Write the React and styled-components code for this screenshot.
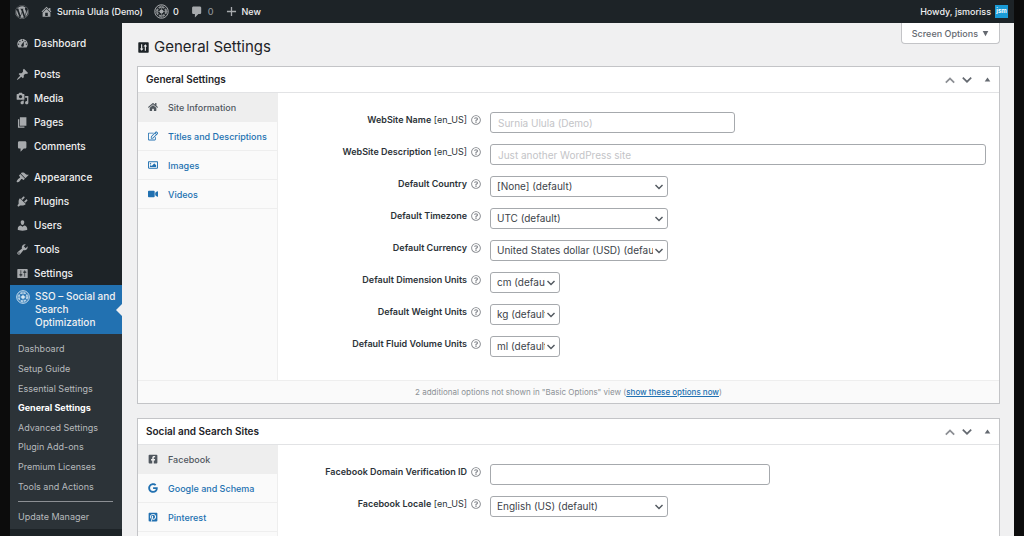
import React from 'react';
import styled, { createGlobalStyle } from 'styled-components';
import {
  FaWordpress,
  FaHome,
  FaRegEdit,
  FaRegImage,
  FaVideo,
  FaFacebookSquare,
  FaGoogle,
  FaPinterestSquare,
  FaRegQuestionCircle,
} from 'react-icons/fa';

const GlobalStyle = createGlobalStyle`
  * {
    box-sizing: border-box;
  }

  body {
    margin: 0;
    background: #0c0c0c;
    color: #3c434a;
    font-family: Inter, 'Liberation Sans', sans-serif;
    font-size: 10px;
    line-height: 13px;
  }

  button, input, select {
    font: inherit;
    color: inherit;
  }

  ul {
    margin: 0;
    padding: 0;
    list-style: none;
  }

  a {
    text-decoration: none;
  }
`;

const Frame = styled.div`
  display: flex;
  flex-direction: column;
  height: 100vh;
  margin: 0 10px;
  overflow: hidden;
  background: #f0f0f1;
`;

const AdminBar = styled.header`
  display: flex;
  flex: none;
  align-items: center;
  gap: 11px;
  height: 23px;
  padding: 0 6px 0 5px;
  background: #1d2327;
`;

const BarLink = styled.a`
  display: flex;
  align-items: center;
  gap: 4px;
  color: ${({ $dim }) => ($dim ? '#8c9196' : '#f0f0f1')};
  font-size: 9px;
  font-weight: 500;

  svg {
    color: #a7aaad;
  }
`;

const Account = styled(BarLink)`
  margin-left: auto;
`;

const Avatar = styled.span`
  width: 13px;
  height: 13px;
  background: #1a9ad6;
  color: #fff;
  font-size: 6px;
  font-weight: 700;
  line-height: 12px;
  text-align: center;
`;

const Columns = styled.div`
  display: flex;
  flex: 1;
  min-height: 0;
`;

const Sidebar = styled.nav`
  flex: none;
  width: 112px;
  padding-top: 8px;
  background: #1d2327;
`;

const MenuGroup = styled.ul`
  margin-bottom: ${({ $last }) => ($last ? '0' : '7px')};
`;

const MenuLink = styled.a`
  position: relative;
  display: flex;
  align-items: flex-start;
  gap: 5px;
  padding: ${({ $current }) => ($current ? '5px 6px' : '6px 6px 5px')};
  background: ${({ $current }) => ($current ? '#2271b1' : 'transparent')};
  color: #f0f0f1;
  font-weight: 500;

  svg {
    flex: none;
    color: ${({ $current }) => ($current ? '#dbe9f4' : '#a7aaad')};
  }

  &::after {
    content: '';
    display: ${({ $current }) => ($current ? 'block' : 'none')};
    position: absolute;
    top: 50%;
    right: 0;
    margin-top: -6px;
    border: 6px solid transparent;
    border-left-width: 0;
    border-right-color: #f0f0f1;
  }
`;

const Submenu = styled.div`
  padding: 5px 0 4px;
  background: #2c3338;
`;

const SubmenuList = styled.ul`
  display: grid;
  grid-auto-rows: 1fr;
  min-height: ${({ $tall }) => ($tall ? '157px' : '18px')};
  align-items: center;
  padding: 0 8px;
`;

const SubmenuLink = styled.a`
  color: ${({ $current }) => ($current ? '#fff' : '#b7babd')};
  font-size: 9px;
  font-weight: ${({ $current }) => ($current ? 700 : 400)};
`;

const SubmenuRule = styled.hr`
  height: 1px;
  margin: 5px 9px 5px 8px;
  border: 0;
  background: #8c8f94;
`;

const Content = styled.main`
  flex: 1;
  min-width: 0;
  padding: 0 14px 0 15px;
`;

const TitleRow = styled.div`
  display: flex;
  justify-content: space-between;
  align-items: flex-start;
  height: 43px;
`;

const PageTitle = styled.h1`
  display: flex;
  align-items: center;
  gap: 4px;
  margin: 0;
  padding-top: 14px;
  color: #1d2327;
  font-size: 15px;
  font-weight: 400;
  line-height: 20px;
`;

const ScreenOptions = styled.button`
  display: flex;
  align-items: center;
  gap: 4px;
  height: 21px;
  padding: 0 10px;
  border: 1px solid #c3c4c7;
  border-top: 0;
  border-radius: 0 0 4px 4px;
  background: #fff;
  color: #646970;
  font-size: 9px;
  font-weight: 500;
`;

const Panel = styled.section`
  margin-bottom: 14px;
  border: 1px solid #c3c4c7;
  background: #fff;
`;

const PanelHeader = styled.div`
  display: flex;
  align-items: center;
  justify-content: space-between;
  height: 26px;
  padding: 0 8px;
  border-bottom: 1px solid #e2e3e5;
`;

const PanelTitle = styled.h2`
  margin: 0;
  color: #1d2327;
  font-size: 10px;
  font-weight: 600;
`;

const PanelActions = styled.div`
  display: flex;
  align-items: center;
  gap: 5px;
`;

const IconButton = styled.button`
  display: flex;
  padding: 0;
  border: 0;
  background: none;
  color: ${({ $faint }) => ($faint ? '#8c8f94' : '#646970')};
`;

const ToggleButton = styled(IconButton)`
  margin-left: 6px;
`;

const PanelBody = styled.div`
  display: flex;
`;

const Tabs = styled.ul`
  flex: none;
  width: 140px;
  border-right: 1px solid #eee;
  background: #fafafa;
`;

const TabLink = styled.a`
  display: flex;
  align-items: center;
  gap: 10px;
  height: 29px;
  padding-left: 10px;
  border-bottom: 1px solid #eee;
  background: ${({ $current }) => ($current ? '#eee' : 'transparent')};
  color: ${({ $current }) => ($current ? '#50575e' : '#2271b1')};
  font-size: 9px;
  font-weight: 500;
  white-space: nowrap;
`;

const Fields = styled.div`
  flex: 1;
  min-width: 0;
  padding: 19px 13px 12px 0;
`;

const FieldRow = styled.div`
  display: grid;
  grid-template-columns: 189px 23px 1fr;
  height: 32px;
`;

const FieldLabel = styled.label`
  padding-top: 1px;
  color: #2c3338;
  font-size: 9px;
  font-weight: 600;
  text-align: right;

  span {
    font-weight: 400;
  }
`;

const HelpButton = styled(IconButton)`
  align-self: start;
  padding: 3px 0 0 4px;
  color: #8c8f94;
`;

const TextInput = styled.input`
  width: ${({ $width }) => $width};
  height: 21px;
  padding: 0 7px;
  border: 1px solid #a6a9ad;
  border-radius: 3px;
  background: #fff;

  &::placeholder {
    color: #c3c4c7;
    opacity: 1;
  }
`;

const SelectWrap = styled.div`
  display: grid;
  align-items: center;
  width: ${({ $width }) => $width};
  height: 21px;

  select,
  svg {
    grid-area: 1 / 1;
  }

  svg {
    justify-self: end;
    margin-right: 4px;
    color: #50575e;
    pointer-events: none;
  }
`;

const SelectBox = styled.select`
  width: 100%;
  height: 21px;
  padding: 0 14px 0 6px;
  border: 1px solid #a6a9ad;
  border-radius: 3px;
  background: #fff;
  appearance: none;
`;

const PanelFooter = styled.p`
  margin: 0;
  padding: 5px 5px 4px;
  border-top: 1px solid #eee;
  background: #fafafa;
  color: #8c9196;
  font-size: 8px;
  text-align: center;

  a {
    color: #2271b1;
    font-weight: 500;
    text-decoration: underline;
  }
`;

const paths = {
  dashboard:
    'M3.76 16h12.48c1.1-1.37 1.76-3.11 1.76-5 0-4.42-3.58-8-8-8s-8 3.58-8 8c0 1.89.66 3.63 1.76 5zM10 4c.55 0 1 .45 1 1s-.45 1-1 1-1-.45-1-1 .45-1 1-1zM6 6c.55 0 1 .45 1 1s-.45 1-1 1-1-.45-1-1 .45-1 1-1zm8 0c.55 0 1 .45 1 1s-.45 1-1 1-1-.45-1-1 .45-1 1-1zm-5.37 5.55L12 7v6c0 1.1-.9 2-2 2s-2-.9-2-2c0-.57.24-1.08.63-1.45zM4 10c.55 0 1 .45 1 1s-.45 1-1 1-1-.45-1-1 .45-1 1-1zm12 0c.55 0 1 .45 1 1s-.45 1-1 1-1-.45-1-1 .45-1 1-1z',
  posts:
    'M10.44 3.02l1.82-1.82 6.36 6.35-1.83 1.82c-1.05-.68-2.48-.57-3.41.36l-.75.75c-.92.93-1.04 2.35-.35 3.41l-1.83 1.82-2.41-2.41-2.8 2.79c-.42.42-3.38 2.71-3.8 2.29s1.86-3.39 2.28-3.81l2.79-2.79L4.1 9.36l1.83-1.82c1.05.69 2.48.57 3.4-.36l.75-.75c.93-.92 1.05-2.35.36-3.41z',
  media:
    'M13 11V4c0-.55-.45-1-1-1h-1.67L9 1H5L3.67 3H2c-.55 0-1 .45-1 1v7c0 .55.45 1 1 1h10c.55 0 1-.45 1-1zM7 4.5c1.38 0 2.5 1.12 2.5 2.5S8.38 9.5 7 9.5 4.5 8.38 4.5 7 5.62 4.5 7 4.5zM14 6h5v10.5c0 1.38-1.12 2.5-2.5 2.5S14 17.88 14 16.5s1.12-2.5 2.5-2.5c.17 0 .34.02.5.05V9h-3V6zm-4 8.05V13h2v3.5c0 1.38-1.12 2.5-2.5 2.5S7 17.88 7 16.5 8.12 14 9.5 14c.17 0 .34.02.5.05z',
  pages: 'M6 15V2h10v13H6zm-1 1h8v2H3V5h2v11z',
  comments:
    'M5 2h9c1.1 0 2 .9 2 2v7c0 1.1-.9 2-2 2h-2l-5 5v-5H5c-1.1 0-2-.9-2-2V4c0-1.1.9-2 2-2z',
  appearance:
    'M14.48 11.06L7.41 3.99l1.5-1.5c.5-.56 2.3-.47 3.51.32 1.21.8 1.43 1.28 2.91 2.1 1.18.64 2.45 1.26 4.45.85zm-.71.71L6.7 4.7 4.93 6.47c-.39.39-.39 1.02 0 1.41l1.06 1.06c.39.39.39 1.03 0 1.42-.6.6-1.43 1.11-2.21 1.69-.35.26-.7.53-1.01.84C1.43 14.23.4 16.08 1.4 17.07c.99 1 2.84-.03 4.18-1.36.31-.31.58-.66.85-1.02.57-.78 1.08-1.61 1.69-2.21.39-.39 1.02-.39 1.41 0l1.06 1.06c.39.39 1.02.39 1.41 0z',
  plugins:
    'M13.11 4.36L9.87 7.6 8 5.73l3.24-3.24c.35-.34 1.05-.2 1.56.32.52.51.66 1.21.31 1.55zm-8 1.77l.91-1.12 9.01 9.01-1.19.84c-.71.71-2.63 1.16-3.82 1.16H6.14L4.9 17.26c-.59.59-1.54.59-2.12 0-.59-.58-.59-1.53 0-2.12l1.24-1.24v-3.88c0-1.13.4-3.19 1.09-3.89zm7.26 3.97l3.24-3.24c.34-.35 1.04-.21 1.55.31.52.51.66 1.21.31 1.55l-3.24 3.25z',
  users:
    'M10 9.25c-2.27 0-2.73-3.44-2.73-3.44C7 4.02 7.82 2 9.97 2c2.16 0 2.98 2.02 2.71 3.81 0 0-.41 3.44-2.68 3.44zm0 2.57L12.72 10c2.39 0 4.52 2.33 4.52 4.53v2.49s-3.65 1.13-7.24 1.13c-3.65 0-7.24-1.13-7.24-1.13v-2.49c0-2.25 1.94-4.48 4.47-4.48z',
  tools:
    'M16.68 9.77c-1.34 1.34-3.3 1.67-4.95.99l-5.41 6.52c-.99.99-2.59.99-3.58 0s-.99-2.59 0-3.57l6.52-5.42c-.68-1.65-.35-3.61.99-4.95 1.28-1.28 3.12-1.62 4.72-1.06l-2.89 2.89 2.82 2.82 2.86-2.87c.53 1.58.18 3.39-1.08 4.65zM3.81 16.21c.4.39 1.04.39 1.43 0 .4-.4.4-1.04 0-1.43-.39-.4-1.03-.4-1.43 0-.39.39-.39 1.03 0 1.43z',
  settings:
    'M18 16V4c0-.55-.45-1-1-1H3c-.55 0-1 .45-1 1v12c0 .55.45 1 1 1h14c.55 0 1-.45 1-1zM8 11h1c.55 0 1 .45 1 1s-.45 1-1 1H8v1.5c0 .28-.22.5-.5.5s-.5-.22-.5-.5V13H6c-.55 0-1-.45-1-1s.45-1 1-1h1V5.5c0-.28.22-.5.5-.5s.5.22.5.5V11zm5-2h-1c-.55 0-1-.45-1-1s.45-1 1-1h1V5.5c0-.28.22-.5.5-.5s.5.22.5.5V7h1c.55 0 1 .45 1 1s-.45 1-1 1h-1v5.5c0 .28-.22.5-.5.5s-.5-.22-.5-.5V9z',
  titleSettings:
    'M18 17V3c0-.55-.45-1-1-1H3c-.55 0-1 .45-1 1v14c0 .55.45 1 1 1h14c.55 0 1-.45 1-1zM6.300 5h1.700v6.500h2L7.150 15 4.300 11.500h2zM12 15h1.700V8.500h2L12.850 5 10 8.500h2z',
  home: 'M16 8.500l1.530 1.530-1.060 1.060L10 4.600l-6.470 6.490-1.060-1.060L10 2.500l4 4v-2h2v4zm-6-2.460l6 5.990V18H4v-5.970zM12 17v-5H8v5h4z',
  plus: 'M17 9v2h-6v6H9v-6H3V9h6V3h2v6z',
  up: 'M2 13.500L10 5.500l8 8-2 2-6-6-6 6z',
  down: 'M2 7L10 15l8-8-2-2-6 6-6-6z',
  triangleUp: 'M2 16h16L10 4z',
  triangleDown: 'M2 3h16L10 18z',
};

const Icon = ({ name, size = 14 }) => (
  <svg width={size} height={size} viewBox="0 0 20 20" fill="currentColor" fillRule="evenodd" aria-hidden="true">
    <path d={paths[name]} />
  </svg>
);

const WheelIcon = ({ size = 15 }) => (
  <svg width={size} height={size} viewBox="0 0 30 30" fill="none" stroke="currentColor" aria-hidden="true">
    <circle cx="15" cy="15" r="13.500" strokeWidth="2" />
    <circle cx="15" cy="15" r="9" strokeWidth="4" strokeDasharray="5 2.070" opacity="0.8" />
    <circle cx="15" cy="15" r="4" fill="currentColor" stroke="none" />
    <path d="M15 2v26M2 15h26" strokeWidth="1" />
  </svg>
);

const menuGroups = [
  [['dashboard', 'Dashboard']],
  [['posts', 'Posts'], ['media', 'Media'], ['pages', 'Pages'], ['comments', 'Comments']],
  [
    ['appearance', 'Appearance'],
    ['plugins', 'Plugins'],
    ['users', 'Users'],
    ['tools', 'Tools'],
    ['settings', 'Settings'],
  ],
];

const submenu = [
  'Dashboard',
  'Setup Guide',
  'Essential Settings',
  'General Settings',
  'Advanced Settings',
  'Plugin Add-ons',
  'Premium Licenses',
  'Tools and Actions',
];

const generalTabs = [
  [FaHome, 'Site Information'],
  [FaRegEdit, 'Titles and Descriptions'],
  [FaRegImage, 'Images'],
  [FaVideo, 'Videos'],
];

const socialTabs = [
  [FaFacebookSquare, 'Facebook'],
  [FaGoogle, 'Google and Schema'],
  [FaPinterestSquare, 'Pinterest'],
];

const generalFields = [
  { id: 'site-name', label: 'WebSite Name', lang: true, placeholder: 'Surnia Ulula (Demo)', width: '245px' },
  { id: 'site-desc', label: 'WebSite Description', lang: true, placeholder: 'Just another WordPress site', width: '100%' },
  { id: 'country', label: 'Default Country', option: '[None] (default)', width: '178px' },
  { id: 'timezone', label: 'Default Timezone', option: 'UTC (default)', width: '178px' },
  { id: 'currency', label: 'Default Currency', option: 'United States dollar (USD) (default)', width: '178px' },
  { id: 'dimension', label: 'Default Dimension Units', option: 'cm (default)', width: '70px' },
  { id: 'weight', label: 'Default Weight Units', option: 'kg (default)', width: '70px' },
  { id: 'volume', label: 'Default Fluid Volume Units', option: 'ml (default)', width: '70px' },
];

const socialFields = [
  { id: 'fb-domain', label: 'Facebook Domain Verification ID', width: '280px' },
  { id: 'fb-locale', label: 'Facebook Locale', lang: true, option: 'English (US) (default)', width: '178px' },
];

const Field = ({ field }) => (
  <FieldRow>
    <FieldLabel htmlFor={field.id}>
      {field.label}
      {field.lang && <span> [en_US]</span>}
    </FieldLabel>
    <HelpButton type="button" aria-label={`Help for ${field.label}`}>
      <FaRegQuestionCircle size={10} />
    </HelpButton>
    {field.option ? (
      <SelectWrap $width={field.width}>
        <SelectBox id={field.id}>
          <option>{field.option}</option>
        </SelectBox>
        <Icon name="down" size={10} />
      </SelectWrap>
    ) : (
      <TextInput id={field.id} type="text" placeholder={field.placeholder} $width={field.width} />
    )}
  </FieldRow>
);

const MetaBox = ({ title, tabs, fields, children }) => (
  <Panel>
    <PanelHeader>
      <PanelTitle>{title}</PanelTitle>
      <PanelActions>
        <IconButton type="button" aria-label="Move up" $faint>
          <Icon name="up" size={12} />
        </IconButton>
        <IconButton type="button" aria-label="Move down">
          <Icon name="down" size={12} />
        </IconButton>
        <ToggleButton type="button" aria-label="Toggle panel">
          <Icon name="triangleUp" size={7} />
        </ToggleButton>
      </PanelActions>
    </PanelHeader>
    <PanelBody>
      <Tabs>
        {tabs.map(([TabIcon, label], index) => (
          <li key={label}>
            <TabLink href="#" $current={index === 0}>
              <TabIcon size={10} />
              {label}
            </TabLink>
          </li>
        ))}
      </Tabs>
      <Fields>
        {fields.map(field => (
          <Field key={field.id} field={field} />
        ))}
      </Fields>
    </PanelBody>
    {children}
  </Panel>
);

const App = () => (
  <>
    <GlobalStyle />
    <Frame>
      <AdminBar>
        <BarLink href="#" aria-label="About WordPress">
          <FaWordpress size={14} />
        </BarLink>
        <BarLink href="#">
          <Icon name="home" size={13} />
          Surnia Ulula (Demo)
        </BarLink>
        <BarLink href="#">
          <WheelIcon />
          0
        </BarLink>
        <BarLink href="#" $dim>
          <Icon name="comments" />
          0
        </BarLink>
        <BarLink href="#">
          <Icon name="plus" size={13} />
          New
        </BarLink>
        <Account href="#">
          Howdy, jsmoriss
          <Avatar>jsm</Avatar>
        </Account>
      </AdminBar>
      <Columns>
        <Sidebar>
          {menuGroups.map((group, index) => (
            <MenuGroup key={group[0][1]} $last={index === menuGroups.length - 1}>
              {group.map(([icon, label]) => (
                <li key={label}>
                  <MenuLink href="#">
                    <Icon name={icon} size={13} />
                    {label}
                  </MenuLink>
                </li>
              ))}
            </MenuGroup>
          ))}
          <MenuLink href="#" $current>
            <WheelIcon size={14} />
            SSO – Social and Search Optimization
          </MenuLink>
          <Submenu>
            <SubmenuList $tall>
              {submenu.map(label => (
                <li key={label}>
                  <SubmenuLink href="#" $current={label === 'General Settings'}>
                    {label}
                  </SubmenuLink>
                </li>
              ))}
            </SubmenuList>
            <SubmenuRule />
            <SubmenuList>
              <li>
                <SubmenuLink href="#">Update Manager</SubmenuLink>
              </li>
            </SubmenuList>
          </Submenu>
        </Sidebar>
        <Content>
          <TitleRow>
            <PageTitle>
              <Icon name="titleSettings" size={13} />
              General Settings
            </PageTitle>
            <ScreenOptions type="button">
              Screen Options
              <Icon name="triangleDown" size={7} />
            </ScreenOptions>
          </TitleRow>
          <MetaBox title="General Settings" tabs={generalTabs} fields={generalFields}>
            <PanelFooter>
              2 additional options not shown in "Basic Options" view (<a href="#">show these options now</a>)
            </PanelFooter>
          </MetaBox>
          <MetaBox title="Social and Search Sites" tabs={socialTabs} fields={socialFields} />
        </Content>
      </Columns>
    </Frame>
  </>
);

export default App;
